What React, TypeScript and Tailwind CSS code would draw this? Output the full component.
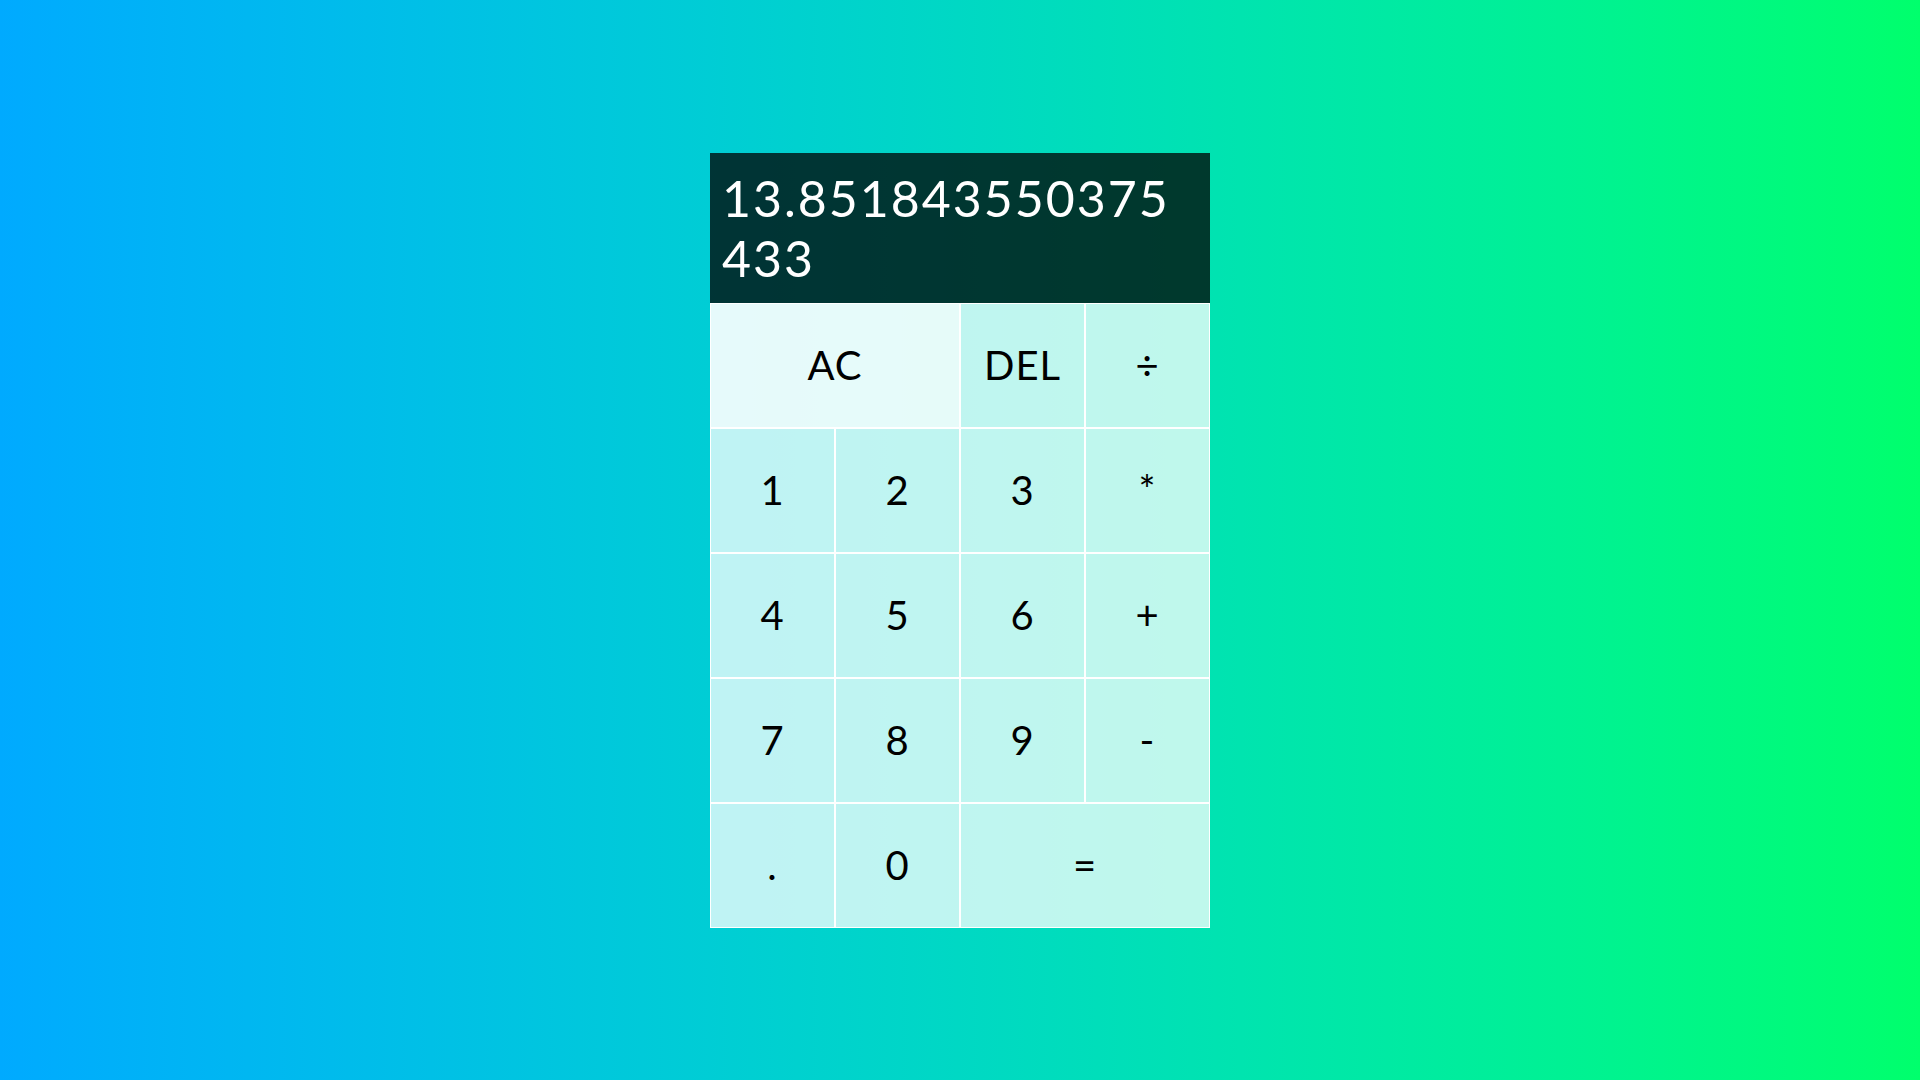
function CalcButton({ label, wide, light }: { label: string; wide?: boolean; light?: boolean }) {
  return (
    <button
      className={
        "border border-white text-[40px] tracking-[1px] text-black outline-none cursor-pointer " +
        (wide ? "col-span-2 " : "") +
        (light ? "bg-white/90" : "bg-white/75 hover:bg-white/90")
      }
    >
      {label}
    </button>
  );
}

export default function App() {
  const rows = [
    ["1", "2", "3", "*"],
    ["4", "5", "6", "+"],
    ["7", "8", "9", "-"],
  ];

  return (
    <div
      className="min-h-screen bg-gradient-to-r from-[#00aaff] to-[#00ff6c] grid justify-center content-center"
      style={{ fontFamily: "Lato, 'Noto Sans', sans-serif" }}
    >
      <div className="grid grid-cols-[repeat(4,125px)] grid-rows-[150px_repeat(5,125px)]">
        {/* display */}
        <div className="col-span-4 bg-black/75 px-3 pt-[15px] text-white text-[50px] leading-[60px] tracking-[2px] break-all">
          <div>13.851843550375</div>
          <div>433</div>
        </div>

        <CalcButton label="AC" wide light />
        <CalcButton label="DEL" />
        <CalcButton label="÷" />

        {rows.map((r) => r.map((k) => <CalcButton key={k} label={k} />))}

        <CalcButton label="." />
        <CalcButton label="0" />
        <CalcButton label="=" wide />
      </div>
    </div>
  );
}
